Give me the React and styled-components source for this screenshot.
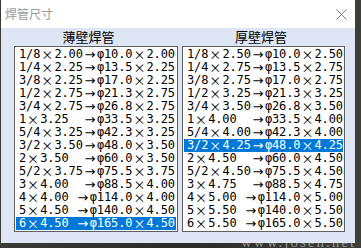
import React from "react";
import styled, { createGlobalStyle } from "styled-components";

const GlobalStyle = createGlobalStyle`
  html, body { margin: 0; padding: 0; }
  body {
    background: #2b2c28;
    font-family: "DejaVu Sans Mono", monospace;
  }
`;

const Stage = styled.div`
  position: relative;
  width: 361px;
  height: 248px;
  overflow: hidden;
  background: linear-gradient(90deg, #3a3b35 0%, #2a2b27 50%, #3d3f38 100%);
  padding-left: 1px;
  box-sizing: border-box;
`;

const Window = styled.div`
  width: 354px;
  height: 243px;
  background: #dee5f4;
  display: flex;
  flex-direction: column;
`;

const TitleBar = styled.div`
  height: 28px;
  background: #ffffff;
  display: flex;
  align-items: center;
  justify-content: space-between;
  padding: 0 8px 0 4px;
  box-sizing: border-box;
`;

const Title = styled.span`
  font-family: "Noto Sans CJK SC", sans-serif;
  font-size: 12px;
  color: #9a9a9a;
  line-height: 14px;
`;

const CloseButton = styled.svg`
  width: 11px;
  height: 11px;
  display: block;
`;

const Client = styled.div`
  flex: 1;
  display: grid;
  grid-template-columns: 164px 163px;
  column-gap: 4px;
  padding-left: 13px;
`;

const Column = styled.div`
  display: flex;
  flex-direction: column;
`;

const Header = styled.div`
  height: 18px;
  line-height: 18px;
  text-align: center;
  font-family: "Noto Sans CJK SC", sans-serif;
  font-size: 13px;
  color: #000;
  padding-right: ${(p) => p.$shift}px;
`;

const ListBox = styled.div`
  background: #ffffff;
  border: 1px solid #5f5f5f;
  padding: 1px;
  height: 182px;
`;

const Row = styled.div`
  height: 13px;
  line-height: 13px;
  padding-left: 3px;
  white-space: pre;
  font-family: "DejaVu Sans Mono", monospace;
  font-size: 12px;
  letter-spacing: -0.1px;
  color: ${(p) => (p.$selected ? "#ffffff" : "#000000")};
  background: ${(p) => (p.$selected ? "#0078d7" : "transparent")};
`;

const Wide = styled.span`
  display: inline-block;
  width: 14px;
  text-align: center;
  font-family: ${(p) => p.$font};
  font-size: ${(p) => p.$size}px;
  line-height: 13px;
  vertical-align: top;
  letter-spacing: 0;
`;

const Watermark = styled.div`
  position: absolute;
  right: 5px;
  bottom: -2px;
  font-family: "Liberation Serif", serif;
  font-size: 15px;
  line-height: 16px;
  letter-spacing: 2px;
  color: rgba(235, 235, 235, 0.5);
`;

const thin = [
  "1/8×2.00→φ10.0×2.00",
  "1/4×2.25→φ13.5×2.25",
  "3/8×2.25→φ17.0×2.25",
  "1/2×2.75→φ21.3×2.75",
  "3/4×2.75→φ26.8×2.75",
  "1×3.25  →φ33.5×3.25",
  "5/4×3.25→φ42.3×3.25",
  "3/2×3.50→φ48.0×3.50",
  "2×3.50  →φ60.0×3.50",
  "5/2×3.75→φ75.5×3.75",
  "3×4.00  →φ88.5×4.00",
  "4×4.00 →φ114.0×4.00",
  "5×4.50 →φ140.0×4.50",
  "6×4.50 →φ165.0×4.50",
];

const thick = [
  "1/8×2.50→φ10.0×2.50",
  "1/4×2.75→φ13.5×2.75",
  "3/8×2.75→φ17.0×2.75",
  "1/2×3.25→φ21.3×3.25",
  "3/4×3.50→φ26.8×3.50",
  "1×4.00  →φ33.5×4.00",
  "5/4×4.00→φ42.3×4.00",
  "3/2×4.25→φ48.0×4.25",
  "2×4.50  →φ60.0×4.50",
  "5/2×4.50→φ75.5×4.50",
  "3×4.75  →φ88.5×4.75",
  "4×5.00 →φ114.0×5.00",
  "5×5.50 →φ140.0×5.50",
  "6×5.50 →φ165.0×5.50",
];

const wideFont = {
  "×": { font: '"Noto Sans CJK SC", sans-serif', size: 12 },
  "→": { font: '"DejaVu Sans", sans-serif', size: 13 },
};

function renderText(s) {
  return s.split(/([×→])/).map((part, i) => {
    const g = wideFont[part];
    return g ? (
      <Wide key={i} $font={g.font} $size={g.size}>
        {part}
      </Wide>
    ) : (
      part
    );
  });
}

function List({ items, selected }) {
  return (
    <ListBox>
      {items.map((t, i) => (
        <Row key={i} $selected={i === selected}>
          {renderText(t)}
        </Row>
      ))}
    </ListBox>
  );
}

export default function App() {
  return (
    <>
      <GlobalStyle />
      <Stage>
        <Window>
          <TitleBar>
            <Title>焊管尺寸</Title>
            <CloseButton viewBox="0 0 11 11">
              <path d="M0.5 0.5 L10.5 10.5 M10.5 0.5 L0.5 10.5" stroke="#7a7a7a" strokeWidth="1" fill="none" />
            </CloseButton>
          </TitleBar>
          <Client>
            <Column>
              <Header $shift={15}>薄壁焊管</Header>
              <List items={thin} selected={13} />
            </Column>
            <Column>
              <Header $shift={5}>厚壁焊管</Header>
              <List items={thick} selected={7} />
            </Column>
          </Client>
        </Window>
        <Watermark>www.josen.net</Watermark>
      </Stage>
    </>
  );
}
